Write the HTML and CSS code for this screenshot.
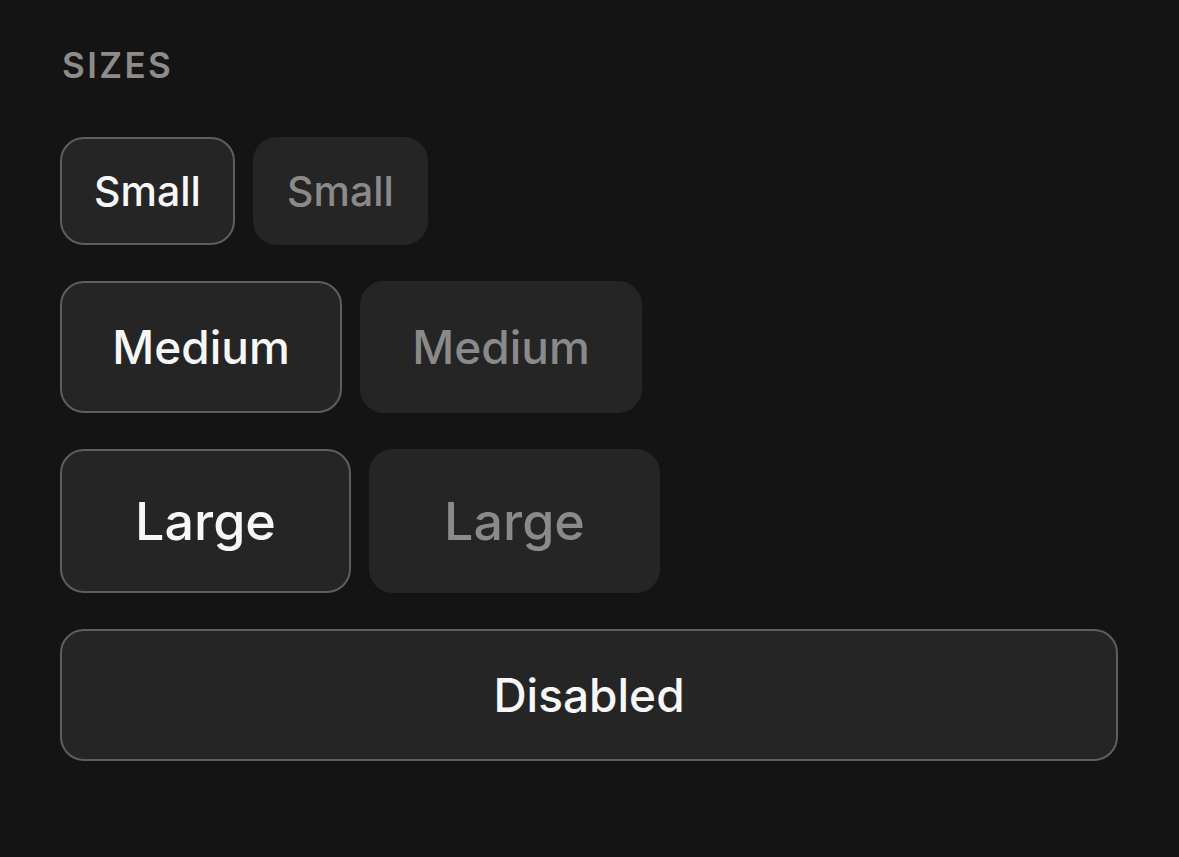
FILE: index.html
```html
<!DOCTYPE html>
<html>
<head>
<meta charset="utf-8">
<link rel="stylesheet" href="styles.css">
</head>
<body>
<main class="panel">
  <h2 class="section-title">SIZES</h2>
  <div class="row">
    <button class="btn btn-sm btn-outline">Small</button>
    <button class="btn btn-sm btn-filled">Small</button>
  </div>
  <div class="row">
    <button class="btn btn-md btn-outline">Medium</button>
    <button class="btn btn-md btn-filled">Medium</button>
  </div>
  <div class="row">
    <button class="btn btn-lg btn-outline">Large</button>
    <button class="btn btn-lg btn-filled">Large</button>
  </div>
  <div class="row">
    <button class="btn btn-md btn-outline btn-block">Disabled</button>
  </div>
</main>
</body>
</html>
```
FILE: styles.css
```css
html, body {
  margin: 0;
  padding: 0;
  background: #141414;
  height: 100%;
}
body {
  font-family: Inter, "Noto Sans", "Liberation Sans", sans-serif;
}
.panel {
  padding: 47px 61px 0 60px;
  display: flex;
  flex-direction: column;
  gap: 36px;
}
.section-title {
  margin: 0 0 18px 2px;
  font-size: 35px;
  font-weight: 600;
  letter-spacing: 2.4px;
  color: #8c8c8c;
  line-height: 36px;
}
.row {
  display: flex;
  gap: 18px;
}
.btn {
  box-sizing: border-box;
  display: inline-flex;
  align-items: center;
  justify-content: center;
  border-radius: 24px;
  background: #252525;
  font-family: inherit;
  font-weight: 500;
  margin: 0;
  padding: 0;
}
.btn-outline {
  border: 2px solid #5e5e5e;
  color: #f7f7f7;
}
.btn-filled {
  border: 2px solid #252525;
  color: #8a8a8a;
}
.btn-sm {
  height: 108px;
  width: 175px;
  font-size: 41px;
}
.btn-md {
  height: 132px;
  width: 282px;
  font-size: 46px;
}
.btn-lg {
  height: 144px;
  width: 291px;
  font-size: 52px;
}
.btn-block {
  width: 100%;
  flex: 1;
}
```
